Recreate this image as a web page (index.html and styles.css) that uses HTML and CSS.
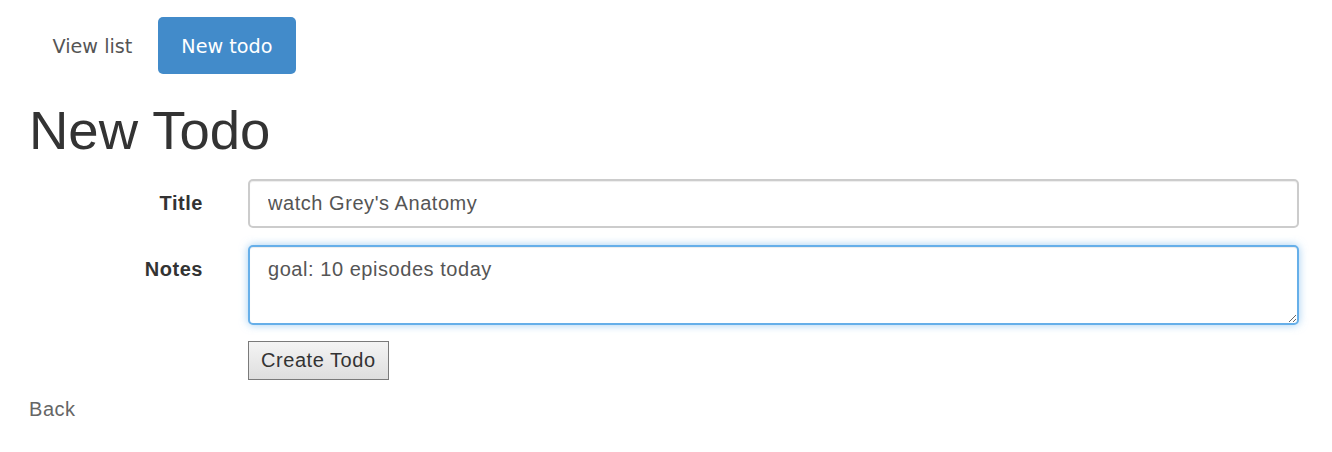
FILE: index.html
```html
<!DOCTYPE html>
<html>
<head>
<meta charset="utf-8">
<link rel="stylesheet" href="styles.css">
</head>
<body>
<div class="container">
  <ul class="nav">
    <li><a class="pill" href="#">View list</a></li>
    <li><a class="pill active" href="#">New todo</a></li>
  </ul>
  <h1 class="title">New Todo</h1>
  <form class="form">
    <div class="group">
      <label class="label">Title</label>
      <div class="field"><input class="input" type="text" value="watch Grey's Anatomy"></div>
    </div>
    <div class="group gap-small">
      <label class="label">Notes</label>
      <div class="field"><textarea class="input textarea focus">goal: 10 episodes today</textarea></div>
    </div>
    <div class="group">
      <div class="spacer"></div>
      <div class="field"><button class="submit" type="button">Create Todo</button></div>
    </div>
  </form>
  <a class="back" href="#">Back</a>
</div>
</body>
</html>
```

FILE: styles.css
```css
html, body {
  margin: 0;
  padding: 0;
  background: #fff;
}
body {
  font-family: "Liberation Sans", Arial, sans-serif;
  font-size: 20px;
  letter-spacing: 0.55px;
  line-height: 1.43;
  color: #333;
}
.container {
  padding: 17px 33px 0 29px;
}
.nav {
  list-style: none;
  margin: 0;
  padding: 0;
  display: flex;
  gap: 2px;
}
.pill {
  display: block;
  padding: 16px 23.5px 13px 23.5px;
  height: 57px;
  box-sizing: border-box;
  border-radius: 5px;
  font-family: "DejaVu Sans", "Open Sans", sans-serif;
  font-size: 19.2px;
  letter-spacing: 0;
  line-height: 28px;
  color: #555;
  text-decoration: none;
}
.pill.active {
  background: #428bca;
  color: #fff;
}
.title {
  margin: 28px 0 0 0;
  font-family: "Liberation Sans", Arial, sans-serif;
  font-weight: normal;
  font-size: 54.5px;
  letter-spacing: 0;
  line-height: 57px;
  color: #333;
}
.form {
  margin-top: 20px;
  display: flex;
  flex-direction: column;
  gap: 17px;
}
.group {
  display: grid;
  grid-template-columns: 219px 1fr;
}
.group.gap-small {
  margin-bottom: -1px;
}
.label {
  text-align: right;
  padding: 10px 45px 0 0;
  font-weight: bold;
  line-height: 28px;
}
.input {
  display: block;
  box-sizing: border-box;
  width: 100%;
  height: 49px;
  padding: 9px 18px 9px 18px;
  border: 2px solid #ccc;
  border-radius: 5px;
  font-family: "Liberation Sans", Arial, sans-serif;
  font-size: 20px;
  letter-spacing: 0.55px;
  line-height: 28px;
  color: #555;
  background: #fff;
  box-shadow: inset 0 1px 1px rgba(0,0,0,0.075);
  outline: none;
}
.textarea {
  height: 80px;
  padding-top: 8px;
  resize: vertical;
}
.focus {
  border-color: #66afe9;
  box-shadow: inset 0 1px 1px rgba(0,0,0,0.075), 0 0 8px rgba(102,175,233,0.6);
}
.submit {
  display: block;
  height: 39px;
  padding: 0 12px;
  border: 1px solid #7a7a7a;
  border-radius: 0;
  background: linear-gradient(#f4f4f4, #dedede);
  font-family: "Liberation Sans", Arial, sans-serif;
  font-size: 20px;
  letter-spacing: 0.55px;
  color: #333;
}
.back {
  display: inline-block;
  margin-top: 15px;
  color: #666;
  text-decoration: none;
  line-height: 28px;
}
```
